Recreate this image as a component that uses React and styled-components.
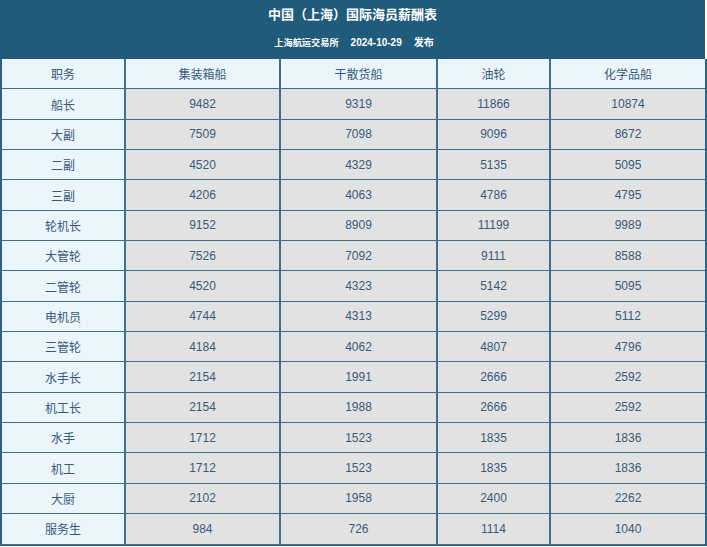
import React from "react";
import styled, { createGlobalStyle } from "styled-components";

const Global = createGlobalStyle`
  html, body { margin: 0; padding: 0; background: #ffffff; }
  body { font-family: "Liberation Sans", Arial, "Noto Sans CJK SC", sans-serif; }
`;

const Page = styled.div`
  width: 707px;
  display: flex;
  flex-direction: column;
`;

const Banner = styled.header`
  height: 59px;
  margin-right: 2px;
  background: #215b7b;
  color: #ffffff;
  display: flex;
  flex-direction: column;
  align-items: center;
  font-weight: bold;
`;

const Title = styled.h1`
  margin: 6px 0 0;
  font-size: 13px;
  line-height: 17px;
  font-weight: bold;
  letter-spacing: 0;
`;

const Sub = styled.div`
  margin-top: 13px;
  font-size: 10px;
  line-height: 14px;
  display: flex;
  gap: 12px;
  padding-left: 3px;
`;

const SubCJK = styled.span`
  font-size: 9.2px;
`;

const Table = styled.table`
  width: 707px;
  border-collapse: separate;
  border-spacing: 0;
  table-layout: fixed;
  border-right: 2px solid #2c6283;
  border-bottom: 1px solid #2c6283;
  font-size: 12px;
  color: #395a7a;
`;

const Row = styled.tr`
  height: 30.35px;
`;

const Cell = styled.td`
  padding: 0;
  text-align: center;
  vertical-align: middle;
  border-left: 2px solid ${(p) => (p.$first ? "#2c6283" : "#3f6f8d")};
  border-bottom: 1px solid #3f6f8d;
  background: ${(p) => (p.$light ? "#eaf5fc" : "#e2e2e2")};
  font-weight: normal;
`;

const cols = [124, 155, 157, 113, 156];
const headers = ["职务", "集装箱船", "干散货船", "油轮", "化学品船"];
const rows = [
  ["船长", 9482, 9319, 11866, 10874],
  ["大副", 7509, 7098, 9096, 8672],
  ["二副", 4520, 4329, 5135, 5095],
  ["三副", 4206, 4063, 4786, 4795],
  ["轮机长", 9152, 8909, 11199, 9989],
  ["大管轮", 7526, 7092, 9111, 8588],
  ["二管轮", 4520, 4323, 5142, 5095],
  ["电机员", 4744, 4313, 5299, 5112],
  ["三管轮", 4184, 4062, 4807, 4796],
  ["水手长", 2154, 1991, 2666, 2592],
  ["机工长", 2154, 1988, 2666, 2592],
  ["水手", 1712, 1523, 1835, 1836],
  ["机工", 1712, 1523, 1835, 1836],
  ["大厨", 2102, 1958, 2400, 2262],
  ["服务生", 984, 726, 1114, 1040],
];

export default function App() {
  return (
    <Page>
      <Global />
      <Banner>
        <Title>中国（上海）国际海员薪酬表</Title>
        <Sub>
          <SubCJK>上海航运交易所</SubCJK>
          <span>2024-10-29</span>
          <span>发布</span>
        </Sub>
      </Banner>
      <Table>
        <colgroup>
          {cols.map((w, i) => (
            <col key={i} style={{ width: w }} />
          ))}
        </colgroup>
        <thead>
          <Row>
            {headers.map((h, i) => (
              <Cell as="th" key={h} $light $first={i === 0}>
                {h}
              </Cell>
            ))}
          </Row>
        </thead>
        <tbody>
          {rows.map((r) => (
            <Row key={r[0]}>
              {r.map((v, i) => (
                <Cell key={i} $light={i === 0} $first={i === 0}>
                  {v}
                </Cell>
              ))}
            </Row>
          ))}
        </tbody>
      </Table>
    </Page>
  );
}
